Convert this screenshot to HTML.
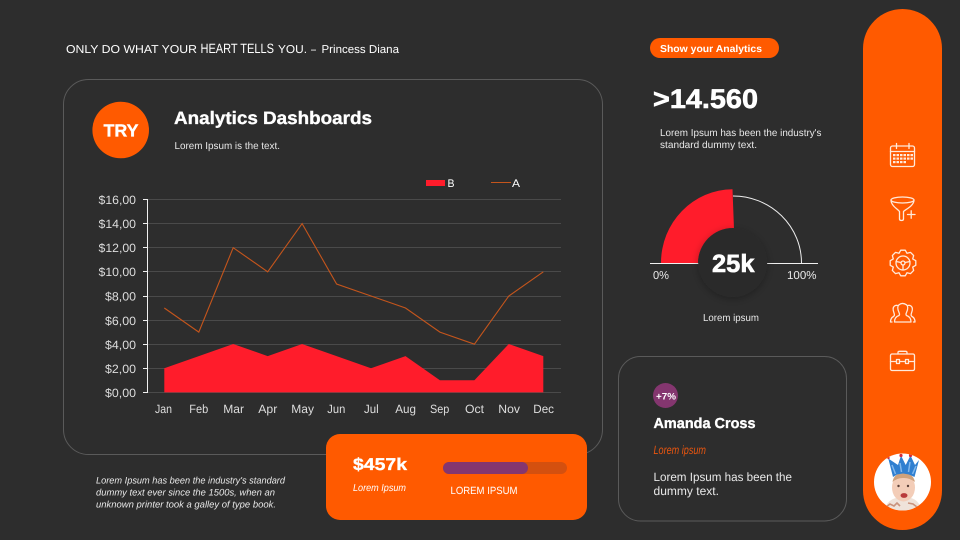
<!DOCTYPE html>
<html><head><meta charset="utf-8"><style>
html,body{margin:0;padding:0;background:#2d2d2d;width:960px;height:540px;overflow:hidden}
svg{display:block}
text{font-family:"Liberation Sans",sans-serif;fill:#fff}
.b{font-weight:700}
.d{font-weight:700;stroke:#fff;stroke-width:.35px}
.s{fill:#e8e8e8}
.i{font-style:italic}
.a{fill:#ddd;font-size:12px}
</style></head><body>
<svg width="960" height="540" viewBox="0 0 960 540" xmlns="http://www.w3.org/2000/svg" text-rendering="geometricPrecision">
<defs>
<filter id="sh" x="-40%" y="-40%" width="180%" height="180%"><feDropShadow dx="0" dy="2" stdDeviation="4" flood-color="#000" flood-opacity=".28"/></filter>
<clipPath id="bc"><circle cx="902.5" cy="482" r="28.5"/></clipPath>
</defs>
<rect width="960" height="540" fill="#2d2d2d"/>

<!-- quote -->
<text x="66" y="53" font-size="11.5" textLength="131" lengthAdjust="spacingAndGlyphs">ONLY DO WHAT YOUR</text>
<text x="200.5" y="53" font-size="13.5" textLength="73.5" lengthAdjust="spacingAndGlyphs">HEART TELLS</text>
<text x="278" y="53" font-size="11.5" textLength="29" lengthAdjust="spacingAndGlyphs">YOU.</text>
<text x="311" y="53" font-size="11.5" textLength="5" lengthAdjust="spacingAndGlyphs">–</text>
<text x="321.5" y="53" font-size="11.5" textLength="77.5" lengthAdjust="spacingAndGlyphs">Princess Diana</text>

<!-- main card -->
<rect x="63.5" y="79.5" width="539" height="375" rx="25" fill="none" stroke="#5a5a5a" stroke-width="1"/>
<circle cx="120.7" cy="130" r="28.3" fill="#ff5a00"/>
<text x="103.5" y="136.5" class="d" font-size="17.5" textLength="35" lengthAdjust="spacingAndGlyphs">TRY</text>
<text x="174" y="124" class="d" font-size="18" textLength="198" lengthAdjust="spacingAndGlyphs">Analytics Dashboards</text>
<text x="174.5" y="149" class="s" font-size="10" textLength="105.5" lengthAdjust="spacingAndGlyphs">Lorem Ipsum is the text.</text>

<!-- legend -->
<rect x="426" y="180" width="19" height="6" fill="#ff1c2b"/>
<text x="447.5" y="187" font-size="11" textLength="7" lengthAdjust="spacingAndGlyphs">B</text>
<line x1="491" y1="182.5" x2="511" y2="182.5" stroke="#c4551c" stroke-width="1"/>
<text x="512" y="187" font-size="11" textLength="8" lengthAdjust="spacingAndGlyphs">A</text>

<!-- grid -->
<g stroke="#4a4a4a" stroke-width="1">
<line x1="147" y1="199.5" x2="561" y2="199.5"/>
<line x1="147" y1="223.5" x2="561" y2="223.5"/>
<line x1="147" y1="247.5" x2="561" y2="247.5"/>
<line x1="147" y1="271.5" x2="561" y2="271.5"/>
<line x1="147" y1="296.5" x2="561" y2="296.5"/>
<line x1="147" y1="320.5" x2="561" y2="320.5"/>
<line x1="147" y1="344.5" x2="561" y2="344.5"/>
<line x1="147" y1="368.5" x2="561" y2="368.5"/>
<line x1="147" y1="392.5" x2="561" y2="392.5"/>
</g>
<!-- area -->
<polygon fill="#ff1c2b" points="164.3,368.2 198.8,356.1 233.2,344 267.7,356.1 302.1,344 336.6,356.1 371,368.2 405.5,356.1 439.9,380.3 474.4,380.3 508.8,344 543.3,356.1 543.3,392.4 164.3,392.4"/>
<!-- line -->
<polyline fill="none" stroke="#c4551c" stroke-width="1.1" points="164.3,308 198.8,332.1 233.2,247.7 267.7,271.8 302.1,223.6 336.6,284 371,296 405.5,308 439.9,332.1 474.4,344.2 508.8,296 543.3,271.8"/>
<!-- axis -->
<g stroke="#f0f0f0" stroke-width="1">
<line x1="147.5" y1="199" x2="147.5" y2="393"/>
<line x1="143" y1="199.5" x2="148" y2="199.5"/>
<line x1="143" y1="223.5" x2="148" y2="223.5"/>
<line x1="143" y1="247.5" x2="148" y2="247.5"/>
<line x1="143" y1="271.5" x2="148" y2="271.5"/>
<line x1="143" y1="296.5" x2="148" y2="296.5"/>
<line x1="143" y1="320.5" x2="148" y2="320.5"/>
<line x1="143" y1="344.5" x2="148" y2="344.5"/>
<line x1="143" y1="368.5" x2="148" y2="368.5"/>
<line x1="143" y1="392.5" x2="148" y2="392.5"/>
</g>
<g>
<text class="a" x="98.5" y="204" textLength="37.5" lengthAdjust="spacingAndGlyphs">$16,00</text>
<text class="a" x="98.5" y="228" textLength="37.5" lengthAdjust="spacingAndGlyphs">$14,00</text>
<text class="a" x="98.5" y="252" textLength="37.5" lengthAdjust="spacingAndGlyphs">$12,00</text>
<text class="a" x="98.5" y="276" textLength="37.5" lengthAdjust="spacingAndGlyphs">$10,00</text>
<text class="a" x="105" y="300.5" textLength="31" lengthAdjust="spacingAndGlyphs">$8,00</text>
<text class="a" x="105" y="325" textLength="31" lengthAdjust="spacingAndGlyphs">$6,00</text>
<text class="a" x="105" y="349" textLength="31" lengthAdjust="spacingAndGlyphs">$4,00</text>
<text class="a" x="105" y="373" textLength="31" lengthAdjust="spacingAndGlyphs">$2,00</text>
<text class="a" x="105" y="397" textLength="31" lengthAdjust="spacingAndGlyphs">$0,00</text>
</g>
<g>
<text class="a" x="155" y="413" textLength="17" lengthAdjust="spacingAndGlyphs">Jan</text>
<text class="a" x="189.3" y="413" textLength="19" lengthAdjust="spacingAndGlyphs">Feb</text>
<text class="a" x="223.3" y="413" textLength="20.7" lengthAdjust="spacingAndGlyphs">Mar</text>
<text class="a" x="258.3" y="413" textLength="19" lengthAdjust="spacingAndGlyphs">Apr</text>
<text class="a" x="291.3" y="413" textLength="22.7" lengthAdjust="spacingAndGlyphs">May</text>
<text class="a" x="327.3" y="413" textLength="18" lengthAdjust="spacingAndGlyphs">Jun</text>
<text class="a" x="364" y="413" textLength="14.7" lengthAdjust="spacingAndGlyphs">Jul</text>
<text class="a" x="395.3" y="413" textLength="20.7" lengthAdjust="spacingAndGlyphs">Aug</text>
<text class="a" x="430" y="413" textLength="19.3" lengthAdjust="spacingAndGlyphs">Sep</text>
<text class="a" x="465" y="413" textLength="19" lengthAdjust="spacingAndGlyphs">Oct</text>
<text class="a" x="498.3" y="413" textLength="21.7" lengthAdjust="spacingAndGlyphs">Nov</text>
<text class="a" x="533.3" y="413" textLength="20.7" lengthAdjust="spacingAndGlyphs">Dec</text>
</g>

<!-- bottom-left note -->
<text class="i s" x="96" y="483.5" font-size="9.5" textLength="189" lengthAdjust="spacingAndGlyphs">Lorem Ipsum has been the industry's standard</text>
<text class="i s" x="96" y="495.5" font-size="9.5" textLength="179" lengthAdjust="spacingAndGlyphs">dummy text ever since the 1500s, when an</text>
<text class="i s" x="96" y="507.5" font-size="9.5" textLength="180" lengthAdjust="spacingAndGlyphs">unknown printer took a galley of type book.</text>

<!-- orange card -->
<rect x="326" y="434" width="261" height="86" rx="14" fill="#ff5a00"/>
<text x="353" y="470" class="d" font-size="17" textLength="54" lengthAdjust="spacingAndGlyphs">$457k</text>
<text x="353" y="491" class="i" font-size="10" textLength="53" lengthAdjust="spacingAndGlyphs">Lorem Ipsum</text>
<rect x="443" y="462" width="124" height="12" rx="6" fill="#d4500f"/>
<rect x="443" y="462" width="85" height="12" rx="6" fill="#84366f"/>
<text x="450.5" y="494" font-size="10.5" textLength="67" lengthAdjust="spacingAndGlyphs">LOREM IPSUM</text>

<!-- right col top -->
<rect x="650" y="38" width="129" height="20" rx="10" fill="#ff5a00"/>
<text x="660" y="52" class="b" font-size="10" textLength="102" lengthAdjust="spacingAndGlyphs">Show your Analytics</text>
<text x="653" y="108" class="d" font-size="27" textLength="105" lengthAdjust="spacingAndGlyphs" style="stroke-width:.6px">&gt;14.560</text>
<text x="660" y="136" class="s" font-size="10" textLength="161.5" lengthAdjust="spacingAndGlyphs">Lorem Ipsum has been the industry's</text>
<text x="660" y="148" class="s" font-size="10" textLength="97" lengthAdjust="spacingAndGlyphs">standard dummy text.</text>

<!-- gauge -->
<line x1="650" y1="263.5" x2="818" y2="263.5" stroke="#f0f0f0" stroke-width="1"/>
<path d="M733 196 A68.5 67 0 0 1 801.5 263" fill="none" stroke="#eee" stroke-width="1"/>
<path d="M661 263 A72 73.5 0 0 1 732.5 189.3 L734 229 A36 34 0 0 0 698 263 Z" fill="#ff1c2b"/>
<circle cx="732.7" cy="262.5" r="34.5" fill="#2c2c2c" filter="url(#sh)"/>
<text x="712" y="272" class="d" font-size="25" textLength="42.5" lengthAdjust="spacingAndGlyphs" style="stroke-width:.6px">25k</text>
<text x="653" y="279" class="s" font-size="11.5" textLength="16" lengthAdjust="spacingAndGlyphs">0%</text>
<text x="787" y="279" class="s" font-size="11.5" textLength="29.5" lengthAdjust="spacingAndGlyphs">100%</text>
<text x="703" y="321" class="s" font-size="10" textLength="56" lengthAdjust="spacingAndGlyphs">Lorem ipsum</text>

<!-- amanda card -->
<rect x="618.5" y="356.5" width="228" height="164.5" rx="22" fill="none" stroke="#5a5a5a" stroke-width="1"/>
<circle cx="665.5" cy="395.5" r="12.5" fill="#84366f"/>
<text x="656" y="399.5" class="b" font-size="9.5" textLength="20" lengthAdjust="spacingAndGlyphs">+7%</text>
<text x="653.5" y="428" class="d" font-size="14.5" textLength="102" lengthAdjust="spacingAndGlyphs">Amanda Cross</text>
<text x="653.5" y="454" class="i" font-size="12" textLength="52.5" lengthAdjust="spacingAndGlyphs" style="fill:#e8550f">Lorem ipsum</text>
<text x="653.5" y="481" class="s" font-size="12" textLength="138.5" lengthAdjust="spacingAndGlyphs">Lorem Ipsum has been the</text>
<text x="653.5" y="495" class="s" font-size="12" textLength="65.5" lengthAdjust="spacingAndGlyphs">dummy text.</text>

<!-- sidebar -->
<rect x="863" y="9" width="79" height="521" rx="39.5" fill="#ff5a00"/>

<g fill="none" stroke="#ffeadb" stroke-width="1.3" stroke-linecap="round" stroke-linejoin="round">
<!-- calendar -->
<rect x="890.5" y="146" width="24" height="20.5" rx="2"/>
<line x1="890.5" y1="151.5" x2="914.5" y2="151.5"/>
<line x1="896.5" y1="143.5" x2="896.5" y2="148.5"/>
<line x1="909" y1="143.5" x2="909" y2="148.5"/>
<g stroke="none" fill="#ffeadb">
<rect x="893" y="154" width="2.5" height="2.2"/><rect x="896.5" y="154" width="2.5" height="2.2"/><rect x="900" y="154" width="2.5" height="2.2"/><rect x="903.5" y="154" width="2.5" height="2.2"/><rect x="907" y="154" width="2.5" height="2.2"/><rect x="910.5" y="154" width="2.5" height="2.2"/>
<rect x="893" y="157.5" width="2.5" height="2.2"/><rect x="896.5" y="157.5" width="2.5" height="2.2"/><rect x="900" y="157.5" width="2.5" height="2.2"/><rect x="903.5" y="157.5" width="2.5" height="2.2"/><rect x="907" y="157.5" width="2.5" height="2.2"/><rect x="910.5" y="157.5" width="2.5" height="2.2"/>
<rect x="893" y="161" width="2.5" height="2.2"/><rect x="896.5" y="161" width="2.5" height="2.2"/><rect x="900" y="161" width="2.5" height="2.2"/><rect x="903.5" y="161" width="2.5" height="2.2"/>
</g>
<!-- funnel -->
<ellipse cx="902.5" cy="200" rx="11.5" ry="3"/>
<path d="M891 200.5 C891.5 206 897.5 209 899.5 211.5 L899.5 219 Q899.5 220.5 901.5 220.5 Q903.5 220.5 903.5 219 L903.5 211.5 C905.5 209.5 913.5 206 914 200.5"/>
<line x1="907.5" y1="214.5" x2="915" y2="214.5"/>
<line x1="911.2" y1="210.8" x2="911.2" y2="218.2"/>
<!-- gear -->
<g transform="translate(903 263)">
<path d="M12.8,-2.26 L12.8,2.26 L9.7,4.02 L10.65,7.46 L7.46,10.65 L4.02,9.7 L2.26,12.8 L-2.26,12.8 L-4.02,9.7 L-7.46,10.65 L-10.65,7.46 L-9.7,4.02 L-12.8,2.26 L-12.8,-2.26 L-9.7,-4.02 L-10.65,-7.46 L-7.46,-10.65 L-4.02,-9.7 L-2.26,-12.8 L2.26,-12.8 L4.02,-9.7 L7.46,-10.65 L10.65,-7.46 L9.7,-4.02 Z"/>
<circle r="7"/>
<circle r="2"/>
<path d="M-7,-1.5 L-2,-.5 M7,-1.5 L2,-.5 M0,2 L0,7"/>
</g>
<!-- people -->
<path d="M894.5 322 Q894.5 317 899 315.5 Q900 314.5 899 312.5 Q896.5 307 899 304.8 Q902.5 302 906.5 304.8 Q909 307 906.5 312.5 Q905.5 314.5 906.5 315.5 Q911 317 911 322 Z"/>
<path d="M892 322 H890.5 Q890.5 318 893.5 316.5 Q895 315.5 894 313 Q892 308 894.5 306 Q896 305 897.5 305.5"/>
<path d="M913.5 322 H915 Q915 318 912 316.5 Q910.5 315.5 911.5 313 Q913.5 308 911 306 Q909.5 305 908 305.5"/>
<!-- briefcase -->
<rect x="890.5" y="354" width="24" height="16.5" rx="1.5"/>
<path d="M898 354 L898 352.5 Q898 351.3 899.5 351.3 L905.5 351.3 Q907 351.3 907 352.5 L907 354"/>
<path d="M890.5 361.5 L896.5 361.5 M899.5 361.5 L905.5 361.5 M908.5 361.5 L914.5 361.5"/>
<rect x="896.5" y="359.5" width="3" height="4"/>
<rect x="905.5" y="359.5" width="3" height="4"/>
</g>

<!-- avatar -->
<circle cx="902.5" cy="482" r="28.5" fill="#fff"/>
<g clip-path="url(#bc)">
<path d="M884 511 Q887 500 896 498 L911 498 Q919 500 922 511 Z" fill="#efe3da"/>
<path d="M886 507 l4 -3 l4 2 l3 -3 l3 3 M908 503 l5 1 l4 3" stroke="#c9927c" stroke-width="1.6" fill="none"/>
<ellipse cx="903.5" cy="487.5" rx="11.5" ry="14" fill="#f3cdb8"/>
<path d="M892.5 482 Q894 473 903.5 473 Q913 473 915 482 Q909 477.5 903 478 Q897 478 892.5 482 Z" fill="#cfa27c"/>
<polygon fill="#2f7fd0" points="888.3,458.5 898,465 901,455.5 905.7,465 910.5,455.5 915,465 919,460 914.5,477 909,474.5 903,473.5 897,474.5 893,477"/>
<path d="M892 465 L895.5 474 M900 463 L901.5 472 M910 462 L908.5 472 M916 466 L912.5 474" stroke="#82b8ec" stroke-width="1.5" fill="none"/>
<circle cx="888.5" cy="458" r="1.2" fill="#c8304a"/>
<circle cx="901" cy="455.5" r="1.6" fill="#d42a3a"/>
<circle cx="910.5" cy="455.5" r="1.6" fill="#d42a3a"/>
<circle cx="898.5" cy="486" r="1.2" fill="#5a4038"/>
<circle cx="908" cy="486" r="1.2" fill="#5a4038"/>
<ellipse cx="904" cy="495.5" rx="3.5" ry="2.4" fill="#b83a3a"/>
</g>
</svg>
</body></html>
